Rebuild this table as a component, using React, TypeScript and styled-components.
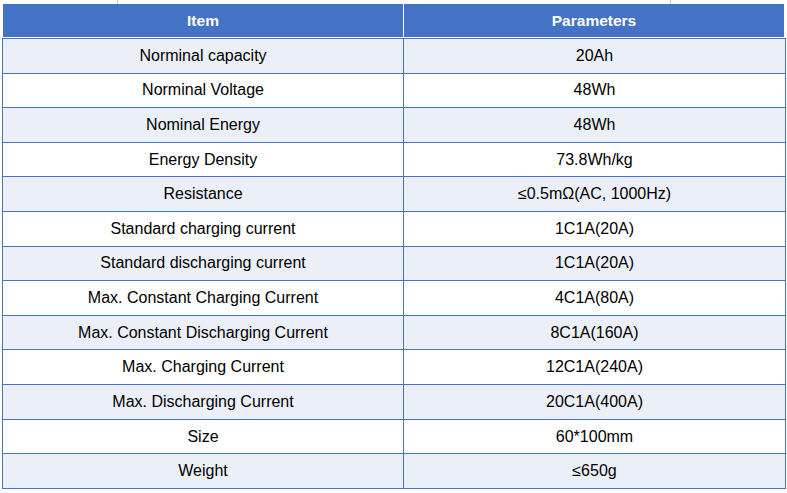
import React from 'react';
import styled, { createGlobalStyle } from 'styled-components';

const GlobalStyle = createGlobalStyle`
  body {
    margin: 0;
    background: #fff;
    font-family: "Liberation Sans", Arial, sans-serif;
    color: #000;
  }
`;

const Page = styled.div`
  width: 787px;
  height: 493px;
  padding-left: 2px;
  box-sizing: border-box;
`;

const TopEdge = styled.div`
  height: 4px;
  display: flex;
  span {
    width: 1px;
    background: #c8c8c8;
  }
  .first {
    margin-left: 115px;
  }
  .second {
    margin-left: 552px;
  }
`;

const HeaderRow = styled.div`
  margin-left: 1px;
  width: 781px;
  height: 33px;
  display: grid;
  grid-template-columns: 400px 1px 1fr;
  background: #4472c4;
  color: #fff;
  font-weight: bold;
  font-size: 15.5px;
`;

const HeaderCell = styled.div`
  display: flex;
  align-items: center;
  justify-content: center;
`;

const Divider = styled.div`
  background: #fff;
`;

const Table = styled.table`
  margin-top: 1px;
  width: 784px;
  height: 451px;
  border-collapse: collapse;
  table-layout: fixed;
  font-size: 16px;

  col.item {
    width: 401px;
  }
`;

const Row = styled.tr<{ $shaded: boolean }>`
  background: ${(p) => (p.$shaded ? '#ebf0f8' : '#fff')};
`;

const Cell = styled.td`
  border: 1px solid #4472c4;
  text-align: center;
  vertical-align: middle;
  padding: 0;
`;

const rows: [string, string][] = [
  ['Norminal capacity', '20Ah'],
  ['Norminal Voltage', '48Wh'],
  ['Nominal Energy', '48Wh'],
  ['Energy Density', '73.8Wh/kg'],
  ['Resistance', '≤0.5mΩ(AC, 1000Hz)'],
  ['Standard charging current', '1C1A(20A)'],
  ['Standard discharging current', '1C1A(20A)'],
  ['Max. Constant Charging Current', '4C1A(80A)'],
  ['Max. Constant Discharging Current', '8C1A(160A)'],
  ['Max. Charging Current', '12C1A(240A)'],
  ['Max. Discharging Current', '20C1A(400A)'],
  ['Size', '60*100mm'],
  ['Weight', '≤650g'],
];

const App: React.FC = () => {
  return (
    <Page>
      <GlobalStyle />
      <TopEdge>
        <span className="first" />
        <span className="second" />
      </TopEdge>
      <HeaderRow>
        <HeaderCell>Item</HeaderCell>
        <Divider />
        <HeaderCell>Parameters</HeaderCell>
      </HeaderRow>
      <Table>
        <colgroup>
          <col className="item" />
          <col />
        </colgroup>
        <tbody>
          {rows.map(([name, value], i) => (
            <Row key={name} $shaded={i % 2 === 0}>
              <Cell>{name}</Cell>
              <Cell>{value}</Cell>
            </Row>
          ))}
        </tbody>
      </Table>
    </Page>
  );
};

export default App;
